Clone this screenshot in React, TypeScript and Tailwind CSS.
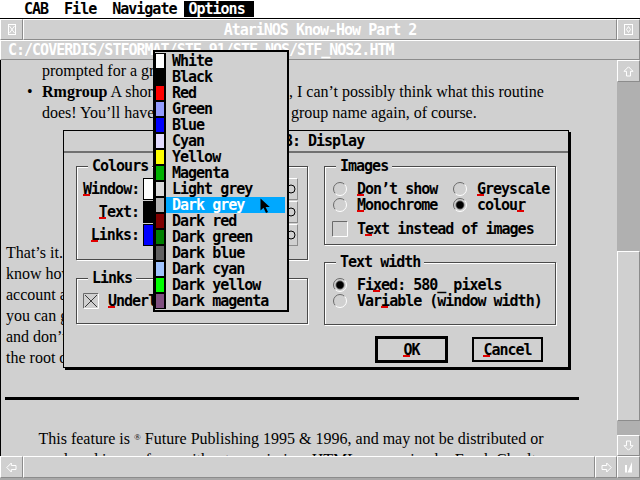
import React from 'react';

const SYS = "font-['DejaVu_Sans_Mono',monospace] font-bold text-[15px] tracking-[-1px] leading-[16px]";
const SERIF = "font-['Liberation_Serif',serif] text-[16px] leading-[21px] text-black";
const BEV = 'border border-t-white border-l-white border-r-[#8c8c8c] border-b-[#8c8c8c]';

const COLOURS: [string, string][] = [
  ['White', '#ffffff'],
  ['Black', '#000000'],
  ['Red', '#ff0000'],
  ['Green', '#949cff'],
  ['Blue', '#0000ff'],
  ['Cyan', '#e2dcff'],
  ['Yellow', '#ffff00'],
  ['Magenta', '#00b000'],
  ['Light grey', '#dadada'],
  ['Dark grey', '#b4b4b4'],
  ['Dark red', '#800000'],
  ['Dark green', '#008000'],
  ['Dark blue', '#606060'],
  ['Dark cyan', '#a0c4ff'],
  ['Dark yellow', '#00ff00'],
  ['Dark magenta', '#805080'],
];

// red shortcut underline under one letter
function Key({ c }: { c: string }) {
  return (
    <span className="relative">
      {c}
      <span className="absolute left-0 top-[14px] w-[7px] h-[2px] bg-[#e00000]" />
    </span>
  );
}

function Radio({ on }: { on?: boolean }) {
  return (
    <svg width="14" height="14" viewBox="0 0 14 14" className="shrink-0">
      <path d="M2.4 11.6 A6.5 6.5 0 0 1 11.6 2.4" fill="none" stroke="#6a6a6a" />
      <path d="M11.6 2.4 A6.5 6.5 0 0 1 2.4 11.6" fill="none" stroke="#ffffff" />
      {on && <circle cx="7" cy="7" r="4.2" fill="#000" stroke="#8a8a8a" strokeWidth="0.8" />}
    </svg>
  );
}

function Check({ on }: { on?: boolean }) {
  return (
    <svg width="16" height="16" viewBox="0 0 16 16" className="shrink-0">
      <path d="M0.5 15.5 V0.5 H15.5" fill="none" stroke="#6a6a6a" />
      <path d="M15.5 0.5 V15.5 H0.5" fill="none" stroke="#ffffff" />
      {on && <path d="M2 2 L14 14 M14 2 L2 14" stroke="#3a3a3a" />}
    </svg>
  );
}

function Arrow({ dir }: { dir: 'up' | 'down' | 'left' | 'right' }) {
  const rot = { up: 0, right: 90, down: 180, left: 270 }[dir];
  return (
    <svg width="11" height="11" viewBox="0 0 11 11" style={{ transform: `rotate(${rot}deg)` }}>
      <path d="M5.5 0.8 L10 5.3 L7.5 5.3 L7.5 10 L3.5 10 L3.5 5.3 L1 5.3 Z" fill="none" stroke="#ffffff" />
    </svg>
  );
}

function Frame({ title, className, children }: { title: React.ReactNode; className?: string; children?: React.ReactNode }) {
  return (
    <div className={`relative border border-[#4a4a4a] shadow-[1px_1px_0_#ffffff,inset_1px_1px_0_#ffffff] ${className ?? ''}`}>
      <div className="absolute left-[11px] -top-[9px] px-[4px] bg-[#d0d0d0]">{title}</div>
      {children}
    </div>
  );
}

function MenuBar() {
  return (
    <div className={`h-[19px] bg-white border-b border-black flex items-start pt-[1px] pl-[16px] text-black ${SYS}`}>
      {['CAB', 'File', 'Navigate'].map(m => (
        <div key={m} className="px-[8px] h-[16px]">{m}</div>
      ))}
      <div className="h-[16px] w-[70px] pl-[4px] bg-black text-white">Options</div>
    </div>
  );
}

function Window() {
  return (
    <div className="flex flex-col h-[459px] bg-[#d0d0d0]">
      {/* title bar */}
      <div className={`flex h-[21px] text-white ${SYS}`}>
        <div className={`w-[23px] ${BEV} flex items-center justify-center`}>
          <svg width="8" height="11" viewBox="0 0 8 11">
            <rect x="0.5" y="0.5" width="7" height="10" fill="none" stroke="#fff" />
            <path d="M1.5 2 L6.5 9 M6.5 2 L1.5 9" stroke="#fff" />
          </svg>
        </div>
        <div className={`flex-1 ${BEV} flex items-center justify-center`}>AtariNOS Know-How Part 2</div>
        <div className={`w-[23px] ${BEV} flex items-center justify-center`}>
          <svg width="9" height="11" viewBox="0 0 9 11">
            <rect x="0.5" y="0.5" width="8" height="10" fill="none" stroke="#fff" />
            <path d="M4.5 2.5 L6.5 5.5 L4.5 8.5 L2.5 5.5 Z" fill="none" stroke="#fff" />
          </svg>
        </div>
      </div>
      {/* info line */}
      <div className={`h-[20px] ${BEV} flex items-center pl-[7px] text-white ${SYS}`}>
        C:/COVERDIS/STFORMAT/STF_91/STF_NOS/STF_NOS2.HTM
      </div>
      {/* work area */}
      <div className="flex h-[396px]">
        <div className="w-[617px] border-l border-black overflow-hidden">
          <Document />
        </div>
        <div className="w-[23px] flex flex-col bg-[#b0b0b0]">
          <div className={`h-[22px] ${BEV} bg-[#d0d0d0] flex items-center justify-center`}>
            <Arrow dir="up" />
          </div>
          <div className="flex-1 flex flex-col justify-end">
            <div className={`h-[170px] mb-[14px] ${BEV} bg-[#d0d0d0]`} />
          </div>
          <div className={`h-[21px] ${BEV} bg-[#d0d0d0] flex items-center justify-center`}>
            <Arrow dir="down" />
          </div>
        </div>
      </div>
      {/* horizontal scroller */}
      <div className="flex h-[22px]">
        <div className={`w-[23px] ${BEV} flex items-center justify-center`}>
          <Arrow dir="left" />
        </div>
        <div className={`flex-1 ${BEV}`} />
        <div className={`w-[22px] ${BEV} flex items-center justify-center`}>
          <Arrow dir="right" />
        </div>
        <div className={`w-[23px] ${BEV} flex items-center justify-center`}>
          <svg width="9" height="12" viewBox="0 0 9 12">
            <path d="M1 11.5 L1 4 L3 4 L3 11.5 Z M3.5 11.5 L8 1 L8 11.5 Z" fill="#ffffff" />
          </svg>
        </div>
      </div>
    </div>
  );
}

function Document() {
  return (
    <div className={`${SERIF} w-[580px]`}>
      <div className="pl-[41px] whitespace-nowrap">prompted for a group name.</div>
      <div className="flex whitespace-nowrap">
        <div className="w-[41px] pl-[26px]">•</div>
        <div>
          <span className="inline-block w-[247px]">
            <b>Rmgroup</b> A short one.
          </span>
          , I can’t possibly think what this routine
        </div>
      </div>
      <div className="pl-[41px] whitespace-nowrap">
        <span className="inline-block w-[249px]">does! You’ll have to</span>group name again, of course.
      </div>

      <div className="mt-[119px] pl-[5px] whitespace-nowrap">
        <div>That’s it. Those are all the commands you’ll need.</div>
        <div>know how to post and read, take the time to</div>
        <div>account and group setup, so</div>
        <div>you can get the most out of it</div>
        <div>and don’t forget to keep files in</div>
        <div>the root directory of your disk.</div>
      </div>

      <div className="mt-[29px] ml-[4px] w-[574px] h-[3px] bg-black" />

      <div className="mt-[28px] text-center whitespace-nowrap">
        <div>
          This feature is <sup className="text-[9px]">®</sup> Future Publishing 1995 &amp; 1996, and may not be distributed or
        </div>
        <div>reproduced in any form without permission. HTML conversion by Frank Charlton.</div>
      </div>
    </div>
  );
}

function Dialog() {
  const rows: { label: React.ReactNode; fill: string }[] = [
    { label: <><Key c="W" />indow:</>, fill: 'bg-white' },
    { label: <><Key c="T" />ext:</>, fill: 'bg-black' },
    { label: <><Key c="L" />inks:</>, fill: 'bg-[#0000ff]' },
  ];
  return (
    <div className={`absolute left-[63px] top-[130px] w-[506px] h-[238px] border border-black shadow-[2px_2px_0_#000000] bg-[#d0d0d0] text-black ${SYS}`}>
      <div className="h-[22px] border-b-2 border-[#707070] flex items-center justify-center">CAB: Display</div>
      <div className="flex gap-[16px] pl-[12px] pt-[13px]">
        {/* left column */}
        <div className="w-[232px] flex flex-col">
          <Frame title="Colours" className="h-[94px]">
            <div className="flex flex-col gap-[1px] pt-[11px] pl-[6px]">
              {rows.map((r, i) => (
                <div key={i} className="flex items-center h-[22px]">
                  <div className="w-[56px] text-right">{r.label}</div>
                  <div className={`ml-[4px] w-[138px] h-[22px] border border-black ${r.fill}`} />
                  <div className={`ml-[3px] w-[14px] h-[22px] ${BEV} flex items-center justify-center`}>
                    <svg width="10" height="10" viewBox="0 0 10 10">
                      <circle cx="5" cy="5" r="4" fill="none" stroke="#000" />
                    </svg>
                  </div>
                </div>
              ))}
            </div>
          </Frame>
          <Frame title="Links" className="mt-[18px] h-[46px]">
            <div className="flex items-center gap-[9px] pt-[14px] pl-[6px]">
              <Check on />
              <span><Key c="U" />nderline links</span>
            </div>
          </Frame>
        </div>

        {/* right column */}
        <div className="w-[232px] flex flex-col">
          <Frame title="Images" className="h-[79px]">
            <div className="pt-[14px] pl-[8px]">
              <div className="grid grid-cols-[120px_auto]">
                <div className="flex items-center gap-[10px] h-[16px]"><Radio /><span><Key c="D" />on’t show</span></div>
                <div className="flex items-center gap-[10px] h-[16px]"><Radio /><span><Key c="G" />reyscale</span></div>
                <div className="flex items-center gap-[10px] h-[16px]"><Radio /><span><Key c="M" />onochrome</span></div>
                <div className="flex items-center gap-[10px] h-[16px]"><Radio on /><span>colou<Key c="r" /></span></div>
              </div>
              <div className="mt-[8px] flex items-center gap-[9px] h-[16px] -ml-[1px]">
                <Check />
                <span>T<Key c="e" />xt instead of images</span>
              </div>
            </div>
          </Frame>
          <Frame title="Text width" className="mt-[17px] h-[63px]">
            <div className="pt-[14px] pl-[8px]">
              <div className="flex items-center gap-[10px] h-[16px]"><Radio on /><span>Fi<Key c="x" />ed: 580_ pixels</span></div>
              <div className="flex items-center gap-[10px] h-[16px]"><Radio /><span>Var<Key c="i" />able (window width)</span></div>
            </div>
          </Frame>
          <div className="mt-[11px] flex items-center">
            <div className="ml-[51px] w-[73px] h-[27px] border-[3px] border-black flex items-center justify-center">
              <span><Key c="O" />K</span>
            </div>
            <div className="ml-[24px] w-[71px] h-[25px] border-2 border-black flex items-center justify-center">
              <span><Key c="C" />ancel</span>
            </div>
          </div>
        </div>
      </div>
    </div>
  );
}

function Popup() {
  return (
    <div className={`absolute left-[153px] top-[50px] w-[136px] h-[262px] border-2 border-black bg-[#d0d0d0] pt-[1px] text-black ${SYS}`}>
      {COLOURS.map(([name, col]) => {
        const sel = name === 'Dark grey';
        return (
          <div key={name} className="flex h-[16px]">
            <div className="w-[11px] h-[16px] border-l border-r-2 border-y border-black" style={{ background: col }} />
            <div className={`flex-1 mr-[2px] pl-[6px] ${sel ? 'bg-[#00a8ff] text-white' : ''}`}>{name}</div>
          </div>
        );
      })}
    </div>
  );
}

function Cursor() {
  return (
    <svg className="absolute left-[260px] top-[198px]" width="11" height="16" viewBox="0 0 11 16">
      <path d="M0.5 0.5 L0.5 12.5 L3.5 9.8 L6 15 L8 14 L5.6 9 L9.8 9 Z" fill="#000000" />
    </svg>
  );
}

export default function App() {
  return (
    <div className="relative w-[640px] h-[480px] overflow-hidden bg-[#a8a8a8] select-none">
      <MenuBar />
      <Window />
      <Dialog />
      <Popup />
      <Cursor />
    </div>
  );
}
